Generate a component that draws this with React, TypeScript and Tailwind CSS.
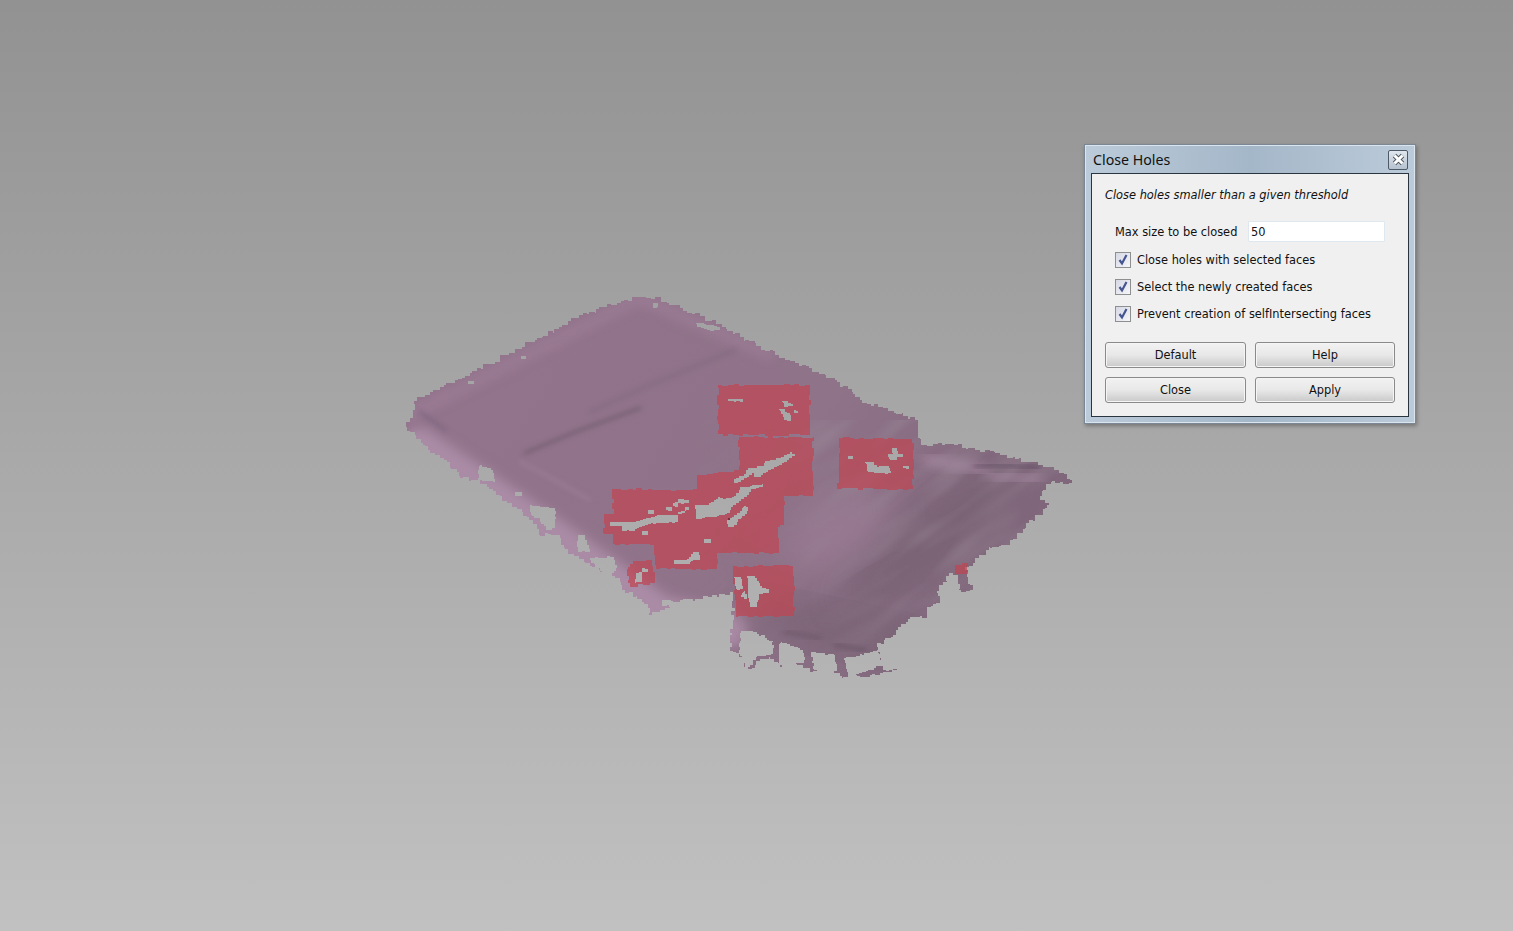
import { useState } from "react";

type Pt = [number, number];

// small seeded random so the jagged mesh edge is the same on every render
function makeRand(seed: number) {
  let s = seed;
  return () => {
    s = (s * 16807) % 2147483647;
    return s / 2147483647;
  };
}

// turns an outline into pixel stairs, like a scanned mesh seen from afar
function jag(points: Pt[], seed: number, step = 4, amp = 2) {
  const rand = makeRand(seed);
  let d = "";
  points.forEach((p, i) => {
    const q = points[(i + 1) % points.length];
    const len = Math.hypot(q[0] - p[0], q[1] - p[1]);
    const n = Math.max(1, Math.round(len / step));
    for (let k = 0; k < n; k++) {
      const t = k / n;
      const x = Math.round(p[0] + (q[0] - p[0]) * t + (k ? (rand() - 0.5) * amp : 0));
      const y = Math.round(p[1] + (q[1] - p[1]) * t + (k ? (rand() - 0.5) * amp : 0));
      d += d ? `H${x}V${y}` : `M${x} ${y}`;
    }
  });
  return d + "Z";
}

// the traces below were read off 3x crops, so map them back to page pixels
function fromCrop(s: string, ox: number, oy: number): Pt[] {
  return s.split(" ").map((pair) => {
    const [x, y] = pair.split(",").map(Number);
    return [ox + x / 3, oy + y / 3] as Pt;
  });
}

const meshOutline: Pt[] = [
  [406, 425], [413, 410], [417, 397], [458, 379], [505, 355], [537, 338], [575, 318], [605, 307],
  [635, 297], [655, 297], [700, 316], [740, 337], [775, 355], [835, 380], [860, 400], [915, 420],
  [921, 445], [945, 444], [1000, 455], [1050, 467], [1072, 483], [1052, 482], [1040, 500], [1050, 505],
  [1010, 545], [990, 547], [975, 563], [965, 570], [973, 590], [961, 595], [958, 575], [953, 573],
  [937, 593], [940, 603], [927, 610], [927, 618], [913, 617], [893, 637], [877, 647], [883, 670],
  [897, 670], [880, 675], [853, 675], [843, 678], [833, 668], [813, 672], [803, 665], [783, 667],
  [770, 657], [747, 670], [743, 657], [730, 650], [733, 620], [733, 592], [712, 597], [680, 602],
  [660, 612], [652, 615], [648, 604], [625, 590], [620, 578], [590, 563], [565, 548], [560, 535],
  [540, 535], [533, 520], [517, 507], [500, 495], [480, 480], [463, 478], [447, 460], [430, 450],
];

const redBlocks: Pt[][] = [
  [[718, 385], [810, 385], [810, 435], [718, 435]],
  [[739, 437], [813, 437], [813, 496], [784, 496], [784, 525], [778, 530], [779, 553], [717, 553], [717, 569], [656, 569], [654, 545], [615, 544], [613, 534], [604, 533], [604, 514], [614, 514], [612, 489], [697, 490], [697, 475], [739, 470]],
  [[839, 438], [913, 439], [913, 489], [838, 489]],
  [[733, 566], [794, 566], [794, 616], [738, 617], [736, 600], [733, 575]],
  [[628, 567], [633, 561], [652, 561], [655, 583], [633, 587], [628, 580]],
  [[955, 565], [962, 563], [968, 566], [968, 574], [955, 574]],
];

// holes in the red areas, 3x view from (590,370)
const redHoles: string[] = [
  "415,87 450,87 458,95 415,95",
  "577,93 590,93 608,108 585,110",
  "567,118 580,118 603,140 603,152 590,150",
  "612,120 627,122 625,130 612,130",
  "432,326 455,318 475,295 520,288 525,272 565,265 600,245 614,258 590,275 560,292 512,320 495,320 492,310 470,325 445,340 432,338",
  "435,378 450,352 515,343 518,352 490,358 470,382 430,410 420,430 380,440 352,440 335,448 318,445 316,405 350,405 385,380 400,388",
  "462,408 478,412 470,432 445,455 432,472 413,472 412,450 440,430",
  "60,457 130,455 160,447 210,435 265,435 265,457 190,460 155,470 135,482 100,482 95,468 60,468",
  "175,420 192,420 192,432 175,432",
  "228,412 245,412 245,422 228,422",
  "248,398 265,398 265,410 248,410",
  "265,388 298,392 298,400 265,400",
  "285,412 300,412 285,430 265,435 265,425 285,420",
  "155,483 175,483 175,494 155,494",
  "343,507 363,507 363,519 343,519",
  "252,570 290,568 310,545 328,545 330,570 310,572 300,582 252,582",
  "137,608 157,605 157,635 137,638",
  "157,595 175,595 175,605 157,605",
  "433,620 452,620 458,658 440,658",
  "472,618 490,618 515,655 537,658 537,668 510,672 500,712 483,712 475,670",
  "462,662 472,680 470,688 453,675",
  "773,258 790,258 790,266 773,266",
  "825,277 845,277 860,290 892,287 902,310 860,310 835,302",
  "905,235 918,235 925,252 942,252 940,262 925,262 920,270 900,268 895,252 908,250",
  "940,288 958,288 958,296 940,296",
  "1090,130 1108,128 1117,135 1112,140 1092,140",
];

// gaps in the torn fringe along the lower left edge, 3x view from (400,285)
const leftGaps: string[] = [
  "240,540 280,555 285,590 230,585",
  "345,620 360,620 365,632 345,632",
  "390,660 465,670 465,730 440,735 420,700 395,690",
  "535,750 550,750 570,800 535,800 530,775",
  "570,820 640,815 650,850 630,880 600,850",
  "785,945 830,950 830,965 790,962",
  "205,288 222,288 222,296 205,296",
  "362,212 380,214 378,222 362,220",
  "760,55 775,55 772,70 762,70",
  "885,115 935,120 960,135 930,135",
];

// gaps along the bottom teeth, 3x view from (720,430)
const bottomGaps: string[] = [
  "62,603 100,606 158,636 160,672 112,682 80,722 70,688 56,660",
  "182,636 248,660 252,698 192,716 176,692",
  "272,666 342,676 350,724 300,728 282,716",
  "372,684 470,660 488,708 402,738 385,742",
];

function MeshDrawing() {
  const outline = jag(meshOutline, 4711, 4, 4);
  return (
    <svg className="absolute inset-0" width={1513} height={931} viewBox="0 0 1513 931">
      <defs>
        <linearGradient id="pageBg" gradientUnits="userSpaceOnUse" x1="0" y1="0" x2="0" y2="931">
          <stop offset="0" stopColor="#929292" />
          <stop offset="1" stopColor="#c1c1c1" />
        </linearGradient>
        <linearGradient id="meshBase" gradientUnits="userSpaceOnUse" x1="500" y1="330" x2="1000" y2="620">
          <stop offset="0" stopColor="#92748c" />
          <stop offset="0.55" stopColor="#8f7389" />
          <stop offset="1" stopColor="#7f667a" />
        </linearGradient>
        <linearGradient id="lumpFade" gradientUnits="userSpaceOnUse" x1="800" y1="600" x2="1000" y2="480">
          <stop offset="0" stopColor="#fff" stopOpacity="0.15" />
          <stop offset="0.5" stopColor="#fff" stopOpacity="1" />
          <stop offset="1" stopColor="#fff" stopOpacity="1" />
        </linearGradient>
        <mask id="lumpMask" maskUnits="userSpaceOnUse" x="700" y="420" width="400" height="280">
          <rect x="700" y="420" width="400" height="280" fill="url(#lumpFade)" />
        </mask>
        <clipPath id="meshClip">
          <path d={outline} />
        </clipPath>
        <filter id="b2" x="-30%" y="-30%" width="160%" height="160%">
          <feGaussianBlur stdDeviation="2.5" />
        </filter>
        <filter id="b5" x="-30%" y="-30%" width="160%" height="160%">
          <feGaussianBlur stdDeviation="6" />
        </filter>
        <filter id="b18" x="-30%" y="-30%" width="160%" height="160%">
          <feGaussianBlur stdDeviation="18" />
        </filter>
        {/* lumpy surface on the right half */}
        <filter id="lumps" x="0" y="0" width="100%" height="100%">
          <feTurbulence type="fractalNoise" baseFrequency="0.012 0.05" numOctaves="2" seed="8" />
          <feColorMatrix type="matrix" values="0 0 0 0 0.32  0 0 0 0 0.25  0 0 0 0 0.31  1.9 0 0 0 -0.72" />
        </filter>
      </defs>

      <path d={outline} fill="url(#meshBase)" shapeRendering="crispEdges" />

      <g clipPath="url(#meshClip)" fill="none" strokeLinecap="round">
        {/* soft shading */}
        <path d="M410 415 L640 298 L770 355" stroke="#a4839e" strokeWidth="8" opacity="0.7" filter="url(#b5)" />
        <path d="M420 445 L560 540 L660 612 L730 630" stroke="#aa8ba6" strokeWidth="34" filter="url(#b5)" />
        <ellipse cx="930" cy="540" rx="110" ry="30" transform="rotate(-40 930 540)" fill="#75606f" opacity="0.7" filter="url(#b18)" />
        <ellipse cx="840" cy="630" rx="90" ry="20" transform="rotate(12 840 630)" fill="#75606f" opacity="0.7" filter="url(#b18)" />
        <ellipse cx="835" cy="530" rx="60" ry="30" transform="rotate(-30 835 530)" fill="#987a93" filter="url(#b18)" />
        <g mask="url(#lumpMask)">
          <rect x="640" y="300" width="520" height="460" transform="rotate(-36 900 530)" filter="url(#lumps)" opacity="0.55" />
        </g>
        <path d="M925 458 L950 464 L985 470" stroke="#b193ad" strokeWidth="7" opacity="0.8" filter="url(#b5)" />
        <path d="M990 475 L1040 480" stroke="#a88aa3" strokeWidth="8" opacity="0.8" filter="url(#b5)" />

        {/* creases */}
        <path d="M525 453 L575 432 L640 408" stroke="#6b5768" strokeWidth="3" opacity="0.75" filter="url(#b2)" />
        <path d="M590 412 L650 385 L735 350" stroke="#75617a" strokeWidth="3" opacity="0.45" filter="url(#b2)" />
        <path d="M420 412 L445 430" stroke="#75607a" strokeWidth="4" opacity="0.6" filter="url(#b2)" />
        <path d="M520 462 L540 472 L590 500" stroke="#a88aa3" strokeWidth="3" opacity="0.5" filter="url(#b2)" />
        <path d="M975 466 L1000 465 L1040 468" stroke="#54445a" strokeWidth="2.5" opacity="0.8" filter="url(#b2)" />
        <path d="M785 632 L820 638" stroke="#5d4c5c" strokeWidth="3" opacity="0.55" filter="url(#b2)" />
        <path d="M835 645 L865 650" stroke="#5d4c5c" strokeWidth="3" opacity="0.7" filter="url(#b2)" />
      </g>

      {/* selected faces */}
      {redBlocks.map((b, i) => (
        <path key={i} d={jag(b, 97 + i * 13, 5, 2)} fill="#c04451" fillOpacity="0.7" shapeRendering="crispEdges" />
      ))}
      <rect x="713" y="502" width="3" height="3" fill="#7c2a3c" />
      <rect x="728" y="518" width="4" height="3" fill="#7c2a3c" />

      <g fill="url(#pageBg)" shapeRendering="crispEdges">
        {redHoles.map((p, i) => (
          <path key={p} d={jag(fromCrop(p, 590, 370), 31 + i * 7, 3, 1)} />
        ))}
        {leftGaps.map((p, i) => (
          <path key={p} d={jag(fromCrop(p, 400, 285), 53 + i * 7, 3, 2)} />
        ))}
        {bottomGaps.map((p, i) => (
          <path key={p} d={jag(fromCrop(p, 720, 430), 79 + i * 7, 3, 2)} />
        ))}
      </g>
    </svg>
  );
}

function CheckRow({ label, checked, onToggle }: { label: string; checked: boolean; onToggle: () => void }) {
  return (
    <label className="flex items-center gap-[6px] h-[16px]" onClick={onToggle}>
      <span className="w-[16px] h-[16px] border border-[#8e8f8f] bg-gradient-to-br from-[#d6d8e4] to-[#f6f6fa] flex items-center justify-center">
        {checked && (
          <svg width="12" height="12" viewBox="0 0 12 12">
            <path d="M2.5 6 L5 9.5 L9.5 1" fill="none" stroke="#44558f" strokeWidth="2.2" />
          </svg>
        )}
      </span>
      <span className="pt-[2px]">{label}</span>
    </label>
  );
}

function DlgButton({ label, wide }: { label: string; wide?: boolean }) {
  return (
    <button
      className={`${wide ? "w-[141px]" : "w-[140px]"} h-[26px] pt-[2px] rounded-[3px] border border-[#8a8a8a] bg-gradient-to-b from-[#f2f2f2] via-[#e8e8e8] via-50% to-[#c9c9c9] shadow-[inset_0_0_0_1px_#f5f5f5] text-[#111]`}
    >
      {label}
    </button>
  );
}

export default function App() {
  const [opts, setOpts] = useState([true, true, true]);
  const labels = ["Close holes with selected faces", "Select the newly created faces", "Prevent creation of selfIntersecting faces"];

  return (
    <div className="relative w-[1513px] h-[931px] overflow-hidden bg-gradient-to-b from-[#929292] to-[#c1c1c1]">
      <MeshDrawing />

      {/* dialog window */}
      <div
        className="absolute left-[1084px] top-[144px] w-[332px] h-[280px] flex flex-col px-[6px] pb-[6px] border border-[#7b8795] bg-gradient-to-r from-[#bccbda] via-[#a4b7c8] via-50% to-[#bccbda] shadow-[1px_2px_4px_rgba(0,0,0,0.3),inset_0_0_0_1px_#dbe5ee]"
        style={{ fontFamily: '"DejaVu Sans", "Noto Sans", sans-serif' }}
      >
        <div
          className="h-[28px] shrink-0 flex items-center justify-between pl-[2px] pr-[1px] text-[14.2px] text-[#111]"
          style={{ fontFamily: '"Noto Sans", sans-serif' }}
        >
          <span className="mt-[1px]">Close Holes</span>
          <button className="w-[20px] h-[20px] mt-[1px] rounded-[2px] border border-[#4e5966] bg-gradient-to-b from-[#dfe6ed] to-[#b5c2cf] flex items-center justify-center">
            <svg width="13" height="13" viewBox="0 0 13 13">
              <path d="M2.5 2.5 L10.5 10.5 M10.5 2.5 L2.5 10.5" stroke="#46515c" strokeWidth="4.6" />
              <path d="M2.5 2.5 L10.5 10.5 M10.5 2.5 L2.5 10.5" stroke="#ffffff" strokeWidth="3" />
            </svg>
          </button>
        </div>

        <div className="flex-1 border border-[#2b3540] bg-[#f0f0f0] pl-[13px] pt-[13px] text-[11.4px] text-[#111] flex flex-col">
          <p className="italic h-[17px] leading-[17px]">Close holes smaller than a given threshold</p>

          <div className="flex items-center mt-[17px] pl-[10px] h-[21px]">
            <span className="w-[133px] pt-[2px]">Max size to be closed</span>
            <input
              defaultValue="50"
              className="w-[137px] h-[21px] border border-[#dfe7ef] bg-white pl-[2px] outline-none rounded-[1px]"
            />
          </div>

          <div className="flex flex-col gap-[11px] mt-[10px] pl-[10px]">
            {labels.map((l, i) => (
              <CheckRow
                key={l}
                label={l}
                checked={opts[i]}
                onToggle={() => setOpts(opts.map((o, j) => (j === i ? !o : o)))}
              />
            ))}
          </div>

          <div className="grid grid-cols-[141px_140px] gap-x-[9px] gap-y-[9px] mt-[20px]">
            <DlgButton label="Default" wide />
            <DlgButton label="Help" />
            <DlgButton label="Close" wide />
            <DlgButton label="Apply" />
          </div>
        </div>
      </div>
    </div>
  );
}
